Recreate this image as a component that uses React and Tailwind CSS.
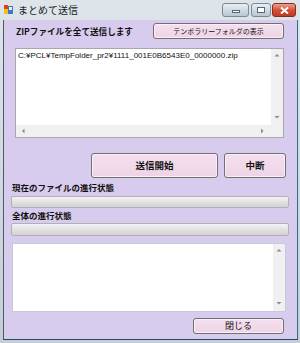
import React from "react";

const jp = { fontFamily: '"Noto Sans CJK JP", "Liberation Sans", sans-serif' };

function Arrow({ dir }) {
  const paths = {
    up: "M0.5 3.5 L3 1 L5.5 3.5 Z",
    down: "M0.5 1 L3 3.5 L5.5 1 Z",
    left: "M3.5 0.5 L1 3 L3.5 5.5 Z",
    right: "M1 0.5 L3.5 3 L1 5.5 Z",
  };
  return (
    <svg width="6" height="6" viewBox="0 0 6 6" className="block">
      <path d={paths[dir]} fill="#8a8a8a" />
    </svg>
  );
}

function VScroll() {
  return (
    <div className="w-[12px] h-full bg-[#f0f0f0] flex flex-col items-center justify-between py-[4px]">
      <Arrow dir="up" />
      <Arrow dir="down" />
    </div>
  );
}

function Btn({ className, children, bold }) {
  return (
    <div
      className={
        "flex items-center justify-center rounded-[3px] border border-[#707070] bg-gradient-to-b from-[#f4e0ee] to-[#eed4e6] text-[#111] shadow-[inset_0_0_0_1px_#fbeef6] " +
        (bold ? "font-bold " : "") +
        className
      }
      style={jp}
    >
      {children}
    </div>
  );
}

function Progress({ className }) {
  return (
    <div
      className={
        "rounded-[2px] border border-[#b2b2b2] bg-gradient-to-b from-[#f3f3f3] via-[#e2e2e2] to-[#d2d2d2] " +
        className
      }
    />
  );
}

export default function App() {
  return (
    <div className="w-[300px] h-[343px] flex flex-col bg-gradient-to-b from-[#dde4ea] to-[#c4ced8] overflow-hidden">
      {/* Title bar */}
      <div className="h-[20px] flex items-start shrink-0">
        <svg width="10" height="10" viewBox="0 0 10 10" className="ml-[4px] mt-[5px]">
          <rect x="0" y="0" width="4" height="4" fill="#e0402a" />
          <rect x="0" y="4" width="4" height="5" fill="#f2c21a" />
          <rect x="4" y="1" width="5" height="8" fill="#3a78d0" />
          <rect x="5" y="2" width="3" height="3" fill="#f6f0c0" />
        </svg>
        <div className="ml-[4px] mt-[3px] text-[10px] leading-[13px] text-[#1a1a1a]" style={jp}>
          まとめて送信
        </div>
        <div className="ml-auto mr-[4px] mt-[3px] flex items-start">
          <div className="w-[27px] h-[14px] rounded-[3px] border border-[#7b8a98] bg-gradient-to-b from-[#e9eef3] to-[#b9c6d2] flex items-center justify-center">
            <div className="w-[8px] h-[3px] bg-white border border-[#5a6670] mt-[3px]" />
          </div>
          <div className="ml-[2px] w-[20px] h-[14px] rounded-[3px] border border-[#7b8a98] bg-gradient-to-b from-[#e9eef3] to-[#b9c6d2] flex items-center justify-center">
            <div className="w-[8px] h-[6px] bg-white border border-[#5a6670]" />
          </div>
          <div className="ml-[1px] w-[24px] h-[14px] rounded-[3px] border border-[#8a2c1c] bg-gradient-to-b from-[#e8a090] via-[#d2503a] to-[#c23a22] flex items-center justify-center">
            <svg width="9" height="7" viewBox="0 0 9 7">
              <path d="M1 0.5 L8 6.5 M8 0.5 L1 6.5" stroke="#fff" strokeWidth="2" />
            </svg>
          </div>
        </div>
      </div>

      {/* Client */}
      <div className="flex-1 ml-[3px] mr-[2px] mb-[3px] border-l border-[#505a62] border-r border-r-[#2f6f8e] border-b border-b-[#1d4c58] bg-[#d8ccee]">
        <div className="flex flex-col pt-[3px]">
          <div className="h-[16px] flex items-center">
            <div className="ml-[12px] text-[8.6px] font-bold text-[#111]" style={jp}>
              ZIPファイルを全て送信します
            </div>
            <Btn className="ml-auto mr-[13px] w-[131px] h-[16px] text-[7px]">
              テンポラリーフォルダの表示
            </Btn>
          </div>

          {/* List box */}
          <div className="mt-[9px] ml-[11px] w-[269px] h-[90px] border border-[#a8a8a8] bg-white flex flex-col">
            <div className="flex-1 flex min-h-0">
              <div
                className="flex-1 pl-[2px] pt-[1px] text-[8px] leading-[11px] text-[#111]"
                style={{ fontFamily: '"Liberation Sans", "Noto Sans CJK JP", sans-serif' }}
              >
                C:¥PCL¥TempFolder_pr2¥1111_001E0B6543E0_0000000.zip
              </div>
              <VScroll />
            </div>
            <div className="h-[12px] flex bg-[#f0f0f0]">
              <div className="flex-1 flex items-center justify-between px-[5px]">
                <Arrow dir="left" />
                <Arrow dir="right" />
              </div>
              <div className="w-[12px] bg-[#f0f0f0]" />
            </div>
          </div>

          {/* Buttons */}
          <div className="mt-[15px] h-[25px] flex">
            <Btn bold className="ml-[87px] w-[127px] h-[25px] text-[9.5px]">
              送信開始
            </Btn>
            <Btn bold className="ml-[6px] w-[62px] h-[25px] text-[9.5px]">
              中断
            </Btn>
          </div>

          <div className="mt-[2px] ml-[8px] h-[14px] flex items-center text-[8.5px] font-bold text-[#111]" style={jp}>
            現在のファイルの進行状態
          </div>
          <Progress className="mt-[2px] ml-[7px] w-[278px] h-[12px]" />
          <div className="ml-[8px] h-[14px] flex items-center text-[8.5px] font-bold text-[#111]" style={jp}>
            全体の進行状態
          </div>
          <Progress className="mt-[1px] ml-[7px] w-[278px] h-[13px]" />

          {/* Text box */}
          <div className="mt-[7px] ml-[8px] w-[274px] h-[69px] border border-[#c8c8d8] bg-white flex">
            <div className="flex-1" />
            <VScroll />
          </div>

          <Btn className="mt-[6px] ml-[189px] w-[91px] h-[16px] text-[9px]">閉じる</Btn>
        </div>
      </div>
    </div>
  );
}
